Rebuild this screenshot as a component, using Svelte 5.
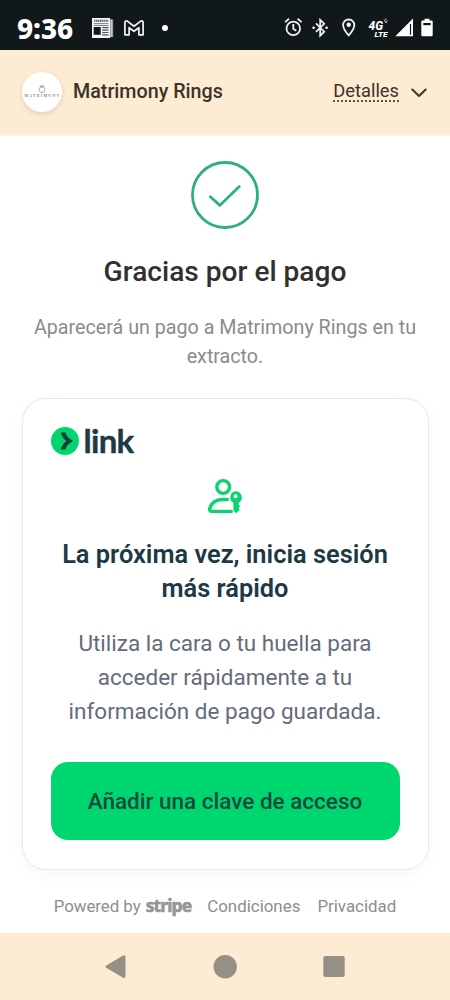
<script>
  const merchant = 'Matrimony Rings';
</script>

<div class="screen">
  <div class="status">
    <span class="clock">9:36</span>
    <svg class="news" width="22" height="20" viewBox="0 0 22 20">
      <path d="M18 1.5h3.2v17.6H18" fill="#8f9494" />
      <path d="M19.7 1.5v17.6" stroke="#dfe2e2" stroke-width=".8" />
      <rect x="0" y="0" width="18.2" height="20" fill="#f4f5f5" />
      <path d="M2 2.8h14.2" stroke="#4b5456" stroke-width="2" stroke-dasharray="1.3 .6" />
      <path d="M1.8 5.6h14.6M1.8 7.5h14.6" stroke="#606869" stroke-width=".8" />
      <rect x="1.7" y="9" width="7" height="7.8" fill="#10181a" />
      <path d="M10.2 9.7h6.3M10.2 12.1h6.3M10.2 14.5h6.3M10.2 16.9h6.3" stroke="#4b5456" stroke-width="1.2" />
    </svg>
    <svg class="mail" width="20" height="16" viewBox="0 0 20 16">
      <path d="M.9 14.8V2.5C.9.8 2.3.4 3.6 1.4L10 6.2l6.4-4.8c1.3-1 2.7-.6 2.7 1.1v12.3h-4.2V7.6L10 11.3 5.1 7.6v7.2z" fill="none" stroke="#f4f5f5" stroke-width="1.7" stroke-linejoin="round" />
    </svg>
    <span class="dot"></span>
    <svg class="system" width="150" height="20" viewBox="0 0 150 20">
      <g fill="none" stroke="#eef0f0" stroke-width="1.8">
        <circle cx="8.3" cy="10.4" r="6.8" />
        <path d="M8.3 6v4.8l3 2M0 4.1l4-3.3M12.6.8l4 3.3" />
        <path d="M31 5.4l8.2 8.3-4 4V1.8l4 4-8.2 8.1" stroke-width="1.8" />
        <path d="M63.7 1.5c-3.4 0-5.6 2.4-5.6 5.5 0 4.2 5.6 10.4 5.6 10.4s5.6-6.2 5.6-10.4c0-3.1-2.2-5.5-5.6-5.5z" stroke-width="1.8" />
      </g>
      <circle cx="28.6" cy="9.7" r="1.3" fill="#fff" />
      <circle cx="41.6" cy="9.7" r="1.3" fill="#fff" />
      <circle cx="63.7" cy="6.8" r="2.2" fill="#fff" />
      <text x="83.5" y="11.8" textLength="14.5" lengthAdjust="spacingAndGlyphs" class="net">4G</text>
      <text x="89.5" y="18.8" textLength="13" lengthAdjust="spacingAndGlyphs" class="lte">LTE</text>
      <path d="M99 1.8l2 3 1.4-2.2M100.4.6l1 1.5" fill="none" stroke="#d8dcdc" stroke-width="1" />
      <path d="M110.3 18.2L128 .5v17.7z" fill="#fff" />
      <path d="M125.5 6v10.7" stroke="#10181a" stroke-width="1.2" />
      <path d="M137.6 2.4h2V.7h4.8v1.7h2q1.3 0 1.3 1.3v13.2q0 1.3-1.3 1.3h-8.8q-1.3 0-1.3-1.3V3.7q0-1.3 1.3-1.3z" fill="#fff" />
      <path d="M138.3 5h7.4v2.2h-7.4z" fill="#10181a" />
    </svg>
  </div>

  <header>
    <div class="avatar">
      <svg width="40" height="40" viewBox="0 0 40 40">
        <circle cx="20" cy="17.7" r="2.9" fill="none" stroke="#777" stroke-width=".6" />
        <path d="M18 13.8h4l-2 1.4z" fill="none" stroke="#777" stroke-width=".5" />
        <text x="2.5" y="25" textLength="35" class="logotext">MATRIMONY</text>
      </svg>
    </div>
    <span class="merchant">{merchant}</span>
    <span class="details">Detalles</span>
    <svg class="chevron" width="16" height="10" viewBox="0 0 16 10">
      <path d="M1.3 1.5L8 8l6.7-6.5" fill="none" stroke="#423a31" stroke-width="2.1" stroke-linecap="round" stroke-linejoin="round" />
    </svg>
  </header>

  <main>
    <svg class="success" width="68" height="68" viewBox="0 0 68 68">
      <circle cx="34" cy="34" r="32.5" fill="none" stroke="#2daf7f" stroke-width="2.8" />
      <path d="M19.3 35.7l9.5 8.7 19.5-18.8" fill="none" stroke="#2daf7f" stroke-width="2.8" stroke-linecap="round" />
    </svg>
    <h1>Gracias por el pago</h1>
    <p class="notice">Aparecerá un pago a {merchant} en tu<br />extracto.</p>

    <section class="card">
      <div class="brand">
        <svg width="28" height="28" viewBox="0 0 28 28">
          <circle cx="14" cy="14" r="14" fill="#00d66f" />
          <path d="M9.8 5.6h4.6c.9 3.6 3.6 6.4 7 7.6v1.6c-3.4 1.2-6.1 4-7 7.6H9.8c1-3.3 2.8-6.3 5.5-8.4-2.7-2.1-4.5-5.1-5.5-8.4z" fill="#173a3b" />
        </svg>
        <span>link</span>
      </div>
      <svg class="passkey" width="36" height="36" viewBox="0 0 36 36">
        <g fill="none" stroke="#0bd36d" stroke-width="3.4" stroke-linecap="round" stroke-linejoin="round">
          <circle cx="16.2" cy="9" r="6.4" />
          <path d="M20.4 21.5h-5.2c-6.8 0-10.6 3.4-12.5 9.1-.4 1.4.4 2.8 1.9 2.8h19.7" />
        </g>
        <path fill-rule="evenodd" d="M28.6 13.3a6.2 6.2 0 0 1 3 11.6v1.8l1.5 1.6-1.5 1.8 1.3 1.7-3.7 3.4-2.8-2.6V24.8a6.2 6.2 0 0 1 2.2-11.5zm0 2.9a2 2 0 1 0 0 4 2 2 0 0 0 0-4z" fill="#0bd36d" />
      </svg>
      <h2>La próxima vez, inicia sesión<br />más rápido</h2>
      <p>Utiliza la cara o tu huella para<br />acceder rápidamente a tu<br />información de pago guardada.</p>
      <button>Añadir una clave de acceso</button>
    </section>

    <footer>
      <span class="powered">Powered by</span>
      <b>stripe</b>
      <span class="terms">Condiciones</span>
      <span>Privacidad</span>
    </footer>
  </main>

  <nav>
    <svg width="22" height="24" viewBox="0 0 22 24"><path d="M1.2 10.5L17.7.7q2.8-1.4 2.8 1.5v18.8q0 2.9-2.8 1.5L1.2 12.7q-1.8-1.1 0-2.2z" fill="#968f85" /></svg>
    <svg width="24" height="24" viewBox="0 0 24 24"><circle cx="12.2" cy="11.7" r="11.7" fill="#968f85" /></svg>
    <svg width="22" height="22" viewBox="0 0 22 22"><rect x=".3" y="0" width="21.4" height="21" rx="2.2" fill="#968f85" /></svg>
  </nav>
</div>

<style>
  :global(body) { margin: 0; background: #fff; }
  .screen {
    width: 450px;
    height: 1000px;
    display: flex;
    flex-direction: column;
    overflow: hidden;
    background: #fff;
    font-family: Roboto, sans-serif;
  }
  svg { display: block; flex: none; }
  .status {
    height: 50px;
    flex: none;
    box-sizing: border-box;
    padding: 6px 15px 0 17px;
    display: flex;
    align-items: center;
    background: #10181a;
    color: #fff;
  }
  .clock { width: 75px; font: 800 28px/34px "Noto Sans", sans-serif; letter-spacing: -.1px; }
  .mail { margin-left: 10px; }
  .dot { width: 6px; height: 6px; margin-left: 18px; border-radius: 50%; background: #fff; }
  .system { margin-left: auto; overflow: visible; }
  .net { font: italic 800 12px Roboto, sans-serif; fill: #fff; }
  .lte { font: italic 800 7.5px Roboto, sans-serif; fill: #fff; }
  header {
    height: 86px;
    flex: none;
    box-sizing: border-box;
    padding: 0 23px 1px 22px;
    display: flex;
    align-items: center;
    background: #feebd4;
    border-bottom: 2px solid #f9f3e9;
    color: #3b332a;
    font-size: 19.7px;
  }
  .avatar { width: 40px; height: 40px; border-radius: 50%; background: #fff; box-shadow: 0 2px 5px #7a5c3030; }
  .logotext { font: 4px "Liberation Serif", serif; fill: #555; }
  .merchant { margin-left: 11px; font-weight: 500; }
  .details { margin-left: auto; font-size: 18.3px; line-height: 19px; border-bottom: 2px dotted #5a5045; }
  .chevron { margin: 3px 0 0 12px; }
  main { flex: 1; display: flex; flex-direction: column; align-items: center; padding: 25px 22px 0; }
  h1 { margin: 25px 0 0; font-size: 28.1px; line-height: 36px; font-weight: 500; color: #303030; }
  .notice { margin: 23px 0 0; text-align: center; font-size: 19.7px; line-height: 29px; color: #8b8b8b; white-space: nowrap; }
  .card {
    width: 407px;
    height: 472px;
    margin-top: 27px;
    padding: 27px 28px 0;
    box-sizing: border-box;
    display: flex;
    flex-direction: column;
    align-items: center;
    border: 1px solid #e8e8e8;
    border-radius: 24px;
    background: #fff;
    box-shadow: 0 4px 16px #00000009;
    text-align: center;
    white-space: nowrap;
  }
  .brand { align-self: flex-start; height: 30px; display: flex; align-items: center; gap: 5px; color: #1d3944; }
  .brand span { margin-top: -2px; font: 700 33px/30px Lato, sans-serif; letter-spacing: -.7px; -webkit-text-stroke: .4px #1d3944; }
  .passkey { margin-top: 22px; }
  h2 { margin: 23px 0 0; font-size: 25.4px; line-height: 34px; font-weight: 600; color: #1d3944; }
  .card p { margin: 21px 0 0; font-size: 22.5px; line-height: 34px; color: #646b7b; }
  button {
    width: 100%;
    height: 78px;
    margin-top: 34px;
    border: 0;
    border-radius: 17px;
    background: #00d66f;
    color: #11493d;
    font: 500 22.5px Roboto, sans-serif;
  }
  footer { margin-top: 24px; display: flex; align-items: baseline; font-size: 16.9px; line-height: 22px; color: #8e8e8e; white-space: nowrap; }
  footer b { margin: 0 16px 0 5px; font: 700 17.5px/22px "Noto Sans", sans-serif; letter-spacing: -.9px; color: #959595; -webkit-text-stroke: .6px #959595; }
  .powered { letter-spacing: -.05px; }
  .terms { margin-right: 17px; }
  nav {
    height: 67px;
    flex: none;
    box-sizing: border-box;
    padding: 0 105px;
    display: flex;
    align-items: center;
    justify-content: space-between;
    background: #feebd4;
  }
</style>
